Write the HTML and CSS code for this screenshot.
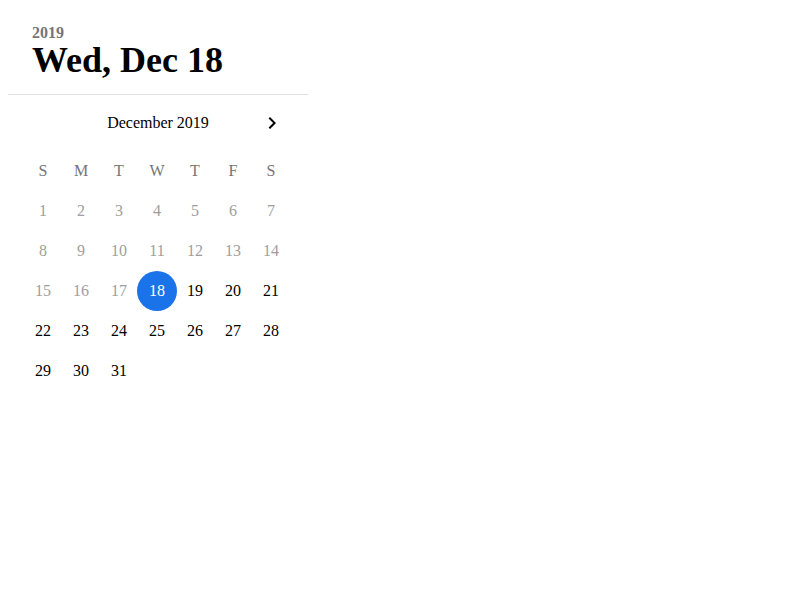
FILE: index.html
```html
<!DOCTYPE html>
<html>
<head>
<meta charset="utf-8">
<link rel="stylesheet" href="styles.css">
</head>
<body>
<div class="picker">
  <div class="toolbar">
    <div class="year">2019</div>
    <div class="title">Wed, Dec 18</div>
  </div>
  <div class="divider"></div>
  <div class="month-header">
    <span class="spacer"></span>
    <span class="month-label">December 2019</span>
    <button class="nav-btn" aria-label="Next month">
      <svg width="24" height="24" viewBox="0 0 24 24"><path d="M10 6L8.59 7.41 13.17 12l-4.58 4.59L10 18l6-6z"/></svg>
    </button>
  </div>
  <div class="grid weekdays">
    <span>S</span><span>M</span><span>T</span><span>W</span><span>T</span><span>F</span><span>S</span>
  </div>
  <div class="grid days">
    <span class="day off">1</span><span class="day off">2</span><span class="day off">3</span><span class="day off">4</span><span class="day off">5</span><span class="day off">6</span><span class="day off">7</span>
    <span class="day off">8</span><span class="day off">9</span><span class="day off">10</span><span class="day off">11</span><span class="day off">12</span><span class="day off">13</span><span class="day off">14</span>
    <span class="day off">15</span><span class="day off">16</span><span class="day off">17</span><span class="day selected"><span class="dot">18</span></span><span class="day">19</span><span class="day">20</span><span class="day">21</span>
    <span class="day">22</span><span class="day">23</span><span class="day">24</span><span class="day">25</span><span class="day">26</span><span class="day">27</span><span class="day">28</span>
    <span class="day">29</span><span class="day">30</span><span class="day">31</span>
  </div>
</div>
</body>
</html>
```

FILE: styles.css
```css
html, body {
  background: #ffffff;
}
body {
  margin: 8px;
  font-family: "Liberation Serif", "Times New Roman", serif;
  color: #000;
}
.picker {
  width: 300px;
}
.toolbar {
  padding: 16px 24px 16px 24px;
}
.year {
  font-size: 16px;
  line-height: 18px;
  font-weight: bold;
  color: #757575;
}
.title {
  font-size: 36px;
  line-height: 36px;
  font-weight: bold;
  color: #000;
}
.divider {
  height: 1px;
  background: #e0e0e0;
}
.month-header {
  margin-top: 4px;
  height: 48px;
  display: grid;
  grid-template-columns: 1fr auto 1fr;
  align-items: center;
}
.month-label {
  font-size: 16px;
  line-height: 48px;
}
.nav-btn {
  justify-self: end;
  margin-right: 12px;
  width: 48px;
  height: 48px;
  padding: 12px;
  border: 0;
  background: transparent;
  display: flex;
  align-items: center;
  justify-content: center;
}
.nav-btn svg {
  display: block;
  fill: #000;
}
.grid {
  display: grid;
  grid-template-columns: repeat(7, 38px);
  padding-left: 16px;
  font-size: 16px;
}
.grid > span {
  height: 40px;
  line-height: 40px;
  text-align: center;
  display: flex;
  align-items: center;
  justify-content: center;
}
.weekdays {
  margin-top: 4px;
  color: #757575;
}
.day {
  color: #000;
}
.day.off {
  color: #9e9e9e;
}
.dot {
  width: 40px;
  height: 40px;
  flex: none;
  border-radius: 50%;
  background: #1a73e8;
  color: #fff;
  line-height: 40px;
  text-align: center;
}
```
